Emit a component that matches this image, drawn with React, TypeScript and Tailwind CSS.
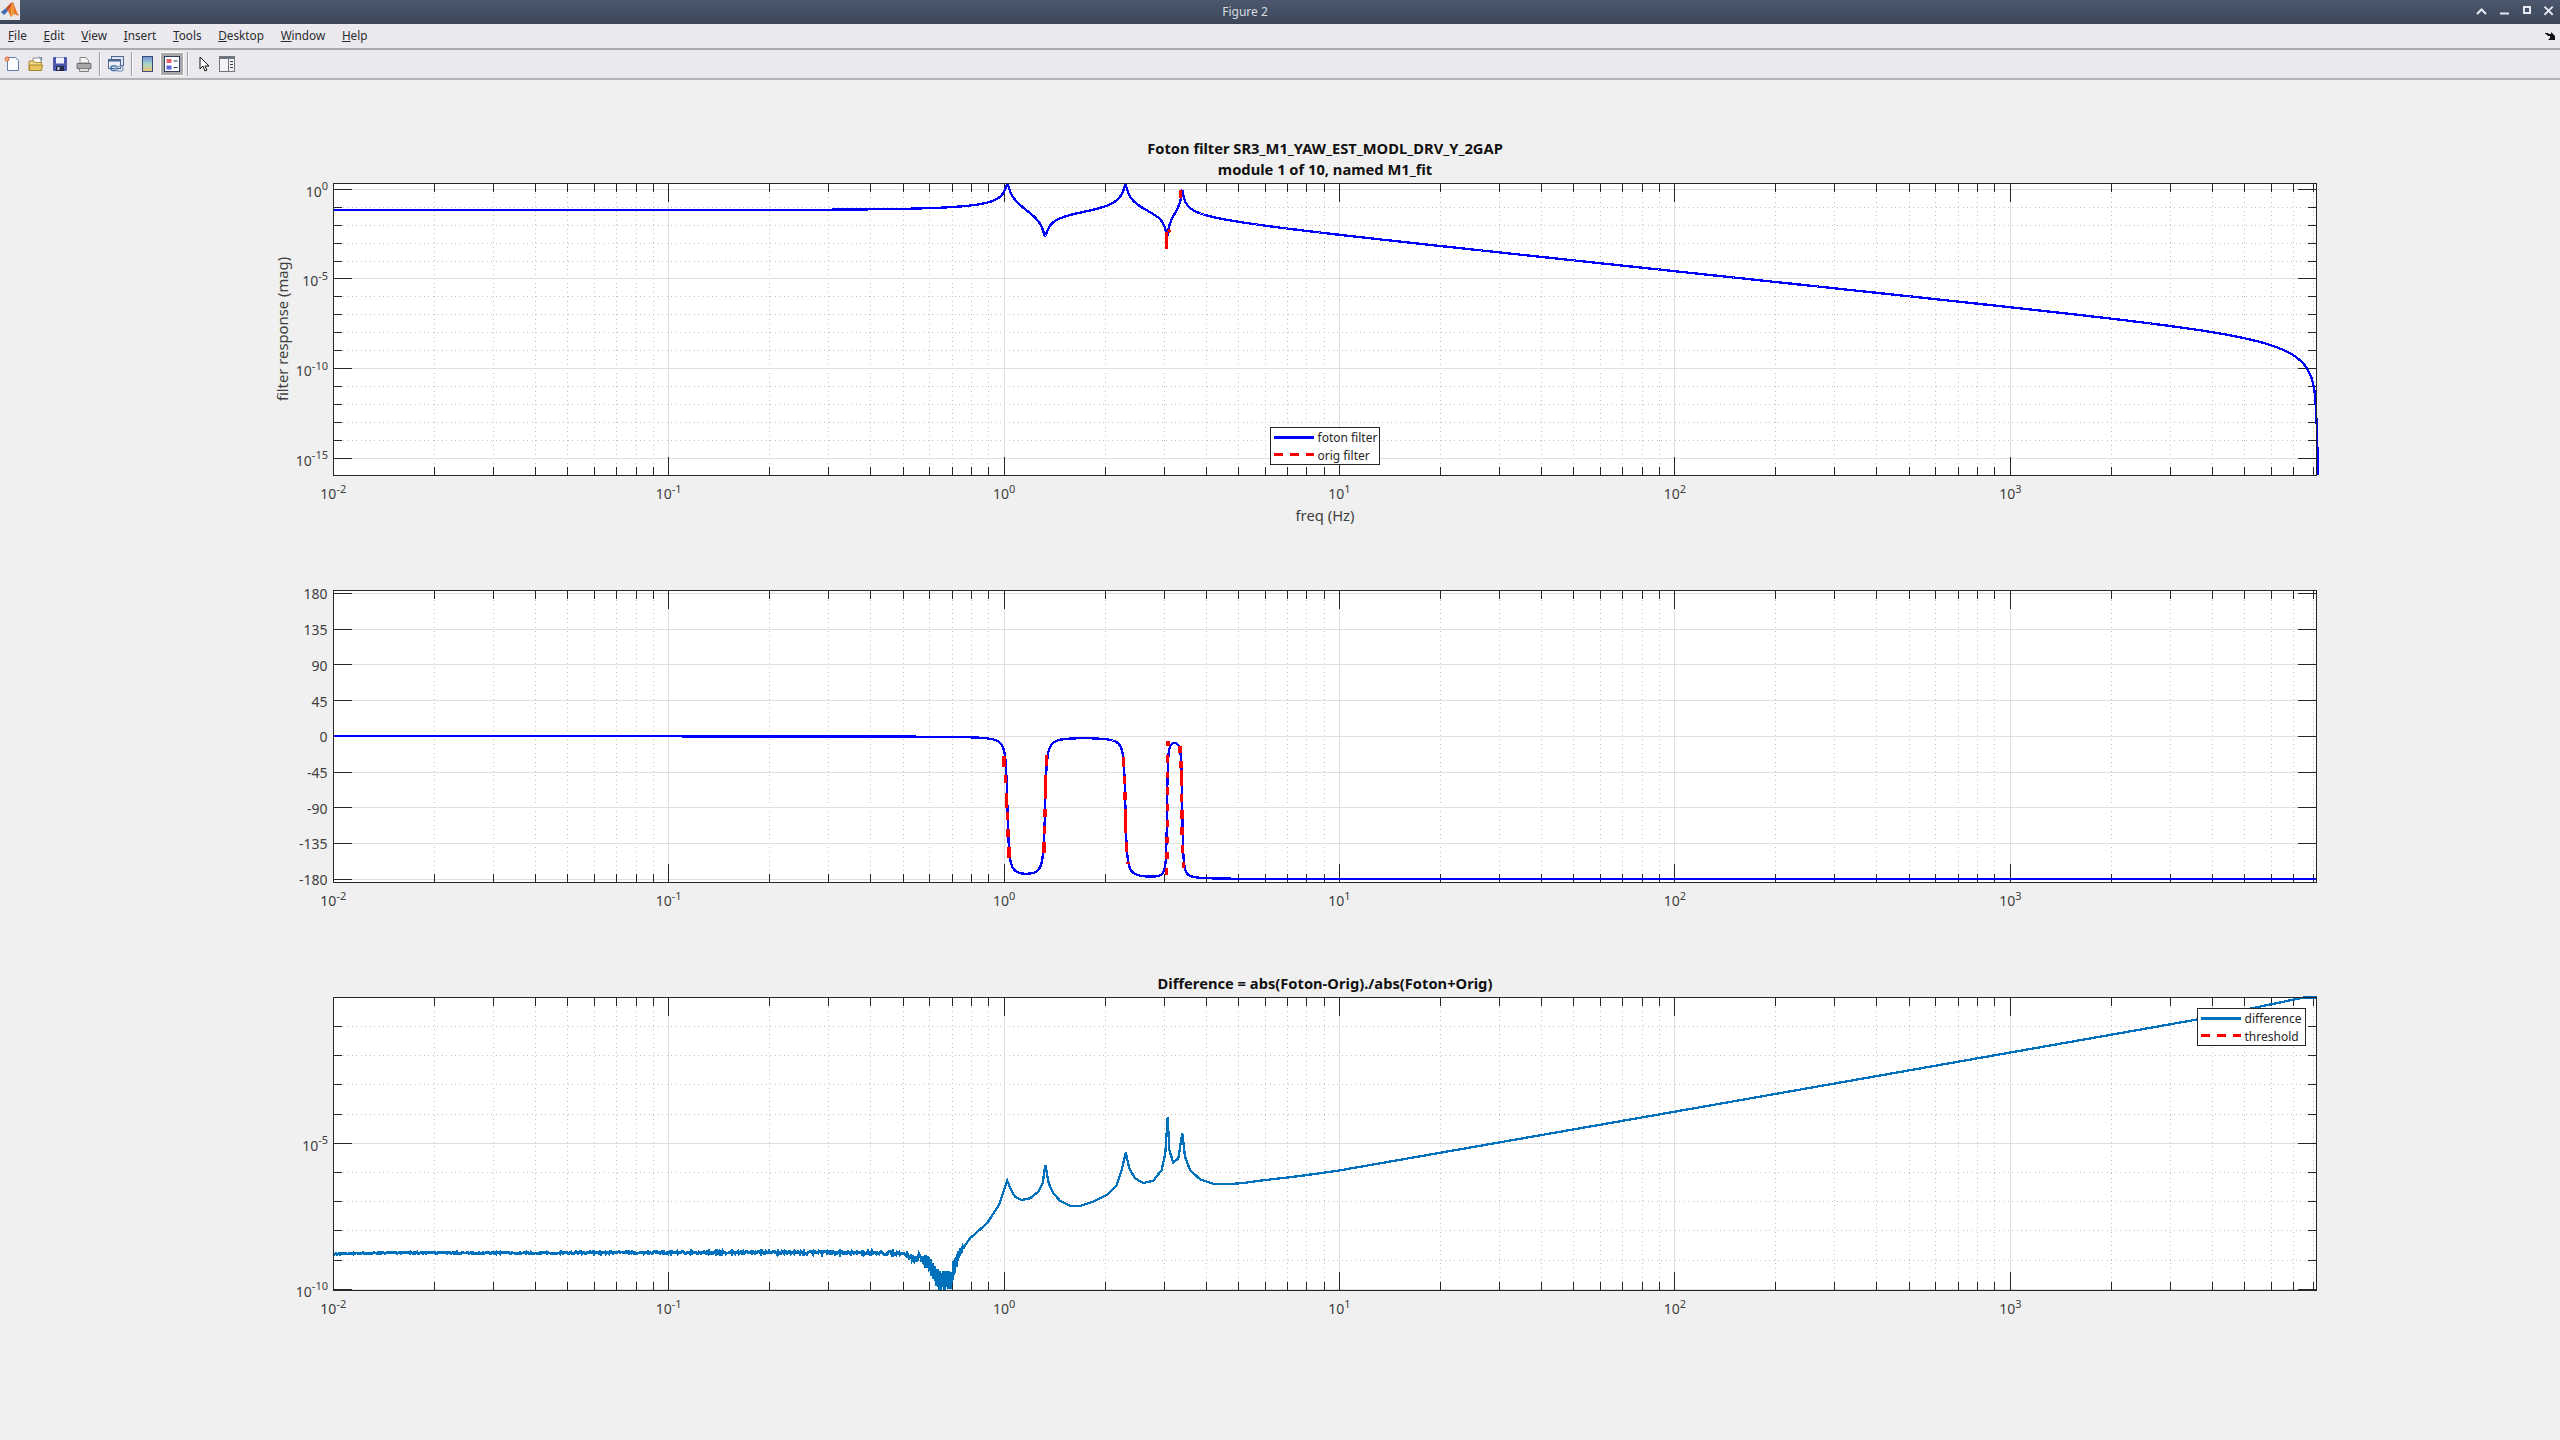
import type { ReactNode } from "react";

// frequency axis shared by all three plots
const X0 = 333.3;
const DEC = 335.4;
const xOf = (f: number) => X0 + DEC * (Math.log10(f) + 2);
const fOf = (x: number) => Math.pow(10, (x - X0) / DEC - 2);

const LEFT = 333.5;
const RIGHT = 2316.5;

const magY = (e: number) => 189.3 - 17.93 * e;
const phaseY = (p: number) => 736.3 - 0.794 * p;
const diffY = (e: number) => 1143.3 - 29.2 * (e + 5);

const range = (a: number, b: number) => {
  const out: number[] = [];
  for (let i = a; i <= b; i++) out.push(i);
  return out;
};

const minorFreqs: number[] = [];
for (let d = -2; d <= 3; d++) {
  for (let k = 2; k <= 9; k++) {
    const f = k * Math.pow(10, d);
    if (xOf(f) < RIGHT) minorFreqs.push(f);
  }
}
const majorFreqs = [0.1, 1, 10, 100, 1000];

// the filter itself: 3 pole pairs, 2 zero pairs, bilinear warped
const POLES = [
  [1.023, 60],
  [2.3, 65],
  [3.4, 110],
];
const ZEROS = [
  [1.325, 58],
  [3.06, 120],
];
const GAIN = 0.27;
const FS = 16384;

function response(f: number) {
  const F = (FS / Math.PI) * Math.tan((Math.PI * f) / FS);
  let logMag = Math.log10(GAIN);
  let phase = 0;
  for (const [f0, q] of ZEROS) {
    const re = f0 * f0 - F * F;
    const im = (F * f0) / q;
    logMag += 0.5 * Math.log10(re * re + im * im);
    phase += Math.atan2(im, re);
  }
  for (const [f0, q] of POLES) {
    const re = f0 * f0 - F * F;
    const im = (F * f0) / q;
    logMag -= 0.5 * Math.log10(re * re + im * im);
    phase -= Math.atan2(im, re);
  }
  return { logMag, deg: (phase * 180) / Math.PI };
}

const samples: number[] = [];
for (let x = X0; x < 2316.4; x += x > 980 && x < 1230 ? 0.2 : 0.6) samples.push(x);

const magPoints =
  samples.map((x) => `${x.toFixed(1)},${Math.max(magY(response(fOf(x)).logMag), 184).toFixed(1)}`).join(" ") +
  " 2317,430 2318,475";
const phasePoints = samples
  .map((x) => `${x.toFixed(1)},${phaseY(response(fOf(x)).deg).toFixed(1)}`)
  .join(" ");

// red dashes only show through on the steep parts of the traces
const toPhase = (x: number, a: number, b: number) => [960 + x / 3, 580 + a / 3, 580 + b / 3];
const phaseDashes = [
  [132, 528, 560], [137, 585, 610], [140, 640, 685], [142, 695, 720], [144, 748, 772], [147, 800, 835],
  [252, 785, 818], [254, 738, 762], [255, 688, 710], [256, 585, 658], [260, 525, 558],
  [491, 530, 562], [493, 588, 612], [495, 636, 660], [496, 688, 760], [499, 785, 815], [504, 847, 853],
  [620, 865, 885], [621, 815, 838], [621, 770, 790], [622, 720, 740], [622, 672, 692], [622, 622, 645],
  [622, 575, 595], [622, 525, 548], [624, 482, 497],
  [660, 498, 520], [663, 543, 565], [664, 570, 617], [664, 642, 665], [666, 690, 716], [666, 742, 766],
  [667, 795, 820], [670, 845, 865],
].map(([x, a, b]) => toPhase(x, a, b));

const diffTable: [number, number][] = [
  [333, 1254.5], [345, 1253.5], [400, 1252.8], [480, 1253], [700, 1252.5], [860, 1252.6], [900, 1253.5],
  [915, 1257], [925, 1261], [932, 1268], [938, 1281], [950, 1281], [955, 1266], [960, 1252], [964, 1247],
];
const diffPeaks: [number, number][] = [
  [964, 1247], [970, 1238.3], [987, 1223.3], [999, 1205], [1004, 1190], [1007.3, 1180.7], [1011, 1190], [1015, 1196.7],
  [1021.7, 1200], [1030, 1198.3], [1038.3, 1191.7], [1042.7, 1183.3], [1045.3, 1164.7], [1048.7, 1183.3],
  [1053.3, 1193.3], [1060, 1200.7], [1070, 1205.7], [1080, 1206], [1093.3, 1201.7], [1106.7, 1195],
  [1116.7, 1185], [1121.7, 1170], [1125.7, 1152.7], [1129.3, 1168.3], [1135, 1178.3], [1143.3, 1183],
  [1153.3, 1180.7], [1161.7, 1170], [1165.3, 1153.3], [1167.7, 1117.3], [1169.3, 1150], [1173.3, 1162.7],
  [1178.3, 1158.3], [1182.3, 1133.3], [1185, 1156.7], [1190, 1170], [1200, 1179.3], [1213.3, 1183.7],
  [1226.7, 1184.3], [1243.3, 1183], [1260, 1180.7], [1300, 1176], [1339, 1170.5], [1673, 1112], [2100, 1036.7],
  [2200, 1019], [2300, 998.3], [2304, 997.5], [2317, 997.5],
];

const lerp = (table: [number, number][], x: number) => {
  for (let i = 1; i < table.length; i++) {
    if (x <= table[i][0]) {
      const [x0, y0] = table[i - 1];
      const [x1, y1] = table[i];
      return y0 + ((x - x0) / (x1 - x0)) * (y1 - y0);
    }
  }
  return table[table.length - 1][1];
};

const jitter = (n: number) => {
  const v = Math.sin(n * 12.9898) * 43758.5453;
  return (v - Math.floor(v)) * 2 - 1;
};

// noise band gets wider towards the dip near 0.65 Hz
const noiseAmp = (x: number) => {
  if (x < 860) return 0.6 + ((x - 333) / 527) * 1.1;
  if (x < 905) return 1.7;
  if (x < 938) return 1.7 + ((x - 905) / 33) * 9;
  if (x < 950) return 10.7;
  return Math.max(10.7 - ((x - 950) / 14) * 9.5, 1);
};

const noisePoints: string[] = [];
for (let x = 333; x <= 964; x += x > 920 ? 0.25 : 1) {
  const y = Math.min(lerp(diffTable, x) + noiseAmp(x) * jitter(x * 2), 1291);
  noisePoints.push(`${x},${y.toFixed(1)}`);
}
const diffNoise = noisePoints.join(" ");
const diffPoints = diffPeaks.map(([x, y]) => `${x},${y}`).join(" ");

function Exp10({ x, y, exp, anchor }: { x: number; y: number; exp: string; anchor: "end" | "middle" }) {
  return (
    <text x={x} y={y} textAnchor={anchor} className="fill-[#404040] text-[14px]">
      10
      <tspan dy={-6.5} className="text-[11px]">
        {exp}
      </tspan>
    </text>
  );
}

function Axes({
  top,
  bottom,
  majorY,
  minorY,
  children,
}: {
  top: number;
  bottom: number;
  majorY: number[];
  minorY: number[];
  children: ReactNode;
}) {
  return (
    <>
      <rect x={LEFT} y={top} width={RIGHT - LEFT} height={bottom - top} className="fill-white" />
      <g shapeRendering="crispEdges" strokeWidth={1}>
        <g className="stroke-[#c0c0c0]" strokeDasharray="1 3.5">
          {minorFreqs.map((f) => (
            <line key={f} x1={xOf(f)} x2={xOf(f)} y1={top} y2={bottom} />
          ))}
          {minorY.map((y) => (
            <line key={y} x1={LEFT} x2={RIGHT} y1={y} y2={y} />
          ))}
        </g>
        <g className="stroke-[#dfdfdf]">
          {majorFreqs.map((f) => (
            <line key={f} x1={xOf(f)} x2={xOf(f)} y1={top} y2={bottom} />
          ))}
          {majorY.map((y) => (
            <line key={y} x1={LEFT} x2={RIGHT} y1={y} y2={y} />
          ))}
        </g>
        <g className="stroke-[#262626]">
          {minorFreqs.map((f) => (
            <g key={f}>
              <line x1={xOf(f)} x2={xOf(f)} y1={top} y2={top + 8.7} />
              <line x1={xOf(f)} x2={xOf(f)} y1={bottom} y2={bottom - 8.7} />
            </g>
          ))}
          {majorFreqs.map((f) => (
            <g key={f}>
              <line x1={xOf(f)} x2={xOf(f)} y1={top} y2={top + 18.7} />
              <line x1={xOf(f)} x2={xOf(f)} y1={bottom} y2={bottom - 18.7} />
            </g>
          ))}
          {minorY.map((y) => (
            <g key={y}>
              <line x1={LEFT} x2={LEFT + 8.7} y1={y} y2={y} />
              <line x1={RIGHT} x2={RIGHT - 8.7} y1={y} y2={y} />
            </g>
          ))}
          {majorY.map((y) => (
            <g key={y}>
              <line x1={LEFT} x2={LEFT + 18.7} y1={y} y2={y} />
              <line x1={RIGHT} x2={RIGHT - 18.7} y1={y} y2={y} />
            </g>
          ))}
        </g>
      </g>
      {children}
      <rect
        x={LEFT}
        y={top}
        width={RIGHT - LEFT}
        height={bottom - top}
        shapeRendering="crispEdges"
        className="fill-none stroke-[#262626]"
      />
      {[-2, -1, 0, 1, 2, 3].map((d) => (
        <Exp10 key={d} x={xOf(Math.pow(10, d))} y={bottom + 23.5} exp={String(d)} anchor="middle" />
      ))}
    </>
  );
}

function Legend({
  x,
  y,
  w,
  color,
  first,
  second,
}: {
  x: number;
  y: number;
  w: number;
  color: string;
  first: string;
  second: string;
}) {
  return (
    <g>
      <rect x={x} y={y} width={w} height={37} shapeRendering="crispEdges" className="fill-white stroke-[#262626]" />
      <line x1={x + 3} x2={x + 43} y1={y + 10} y2={y + 10} stroke={color} strokeWidth={3} shapeRendering="crispEdges" />
      <line
        x1={x + 3}
        x2={x + 43}
        y1={y + 27}
        y2={y + 27}
        stroke="#ff0000"
        strokeWidth={3}
        strokeDasharray="9 7"
        shapeRendering="crispEdges"
      />
      <text x={x + 47} y={y + 14.5} className="fill-[#262626] text-[12px]">
        {first}
      </text>
      <text x={x + 47} y={y + 32} className="fill-[#262626] text-[12px]">
        {second}
      </text>
    </g>
  );
}

function MagnitudePlot() {
  return (
    <svg className="block h-[407px] w-[2560px]" viewBox="0 130 2560 407">
      <text x={1325} y={154} textAnchor="middle" className="fill-[#111111] text-[14.7px] font-bold">
        Foton filter SR3_M1_YAW_EST_MODL_DRV_Y_2GAP
      </text>
      <text x={1325} y={175} textAnchor="middle" className="fill-[#111111] text-[14.7px] font-bold">
        module 1 of 10, named M1_fit
      </text>
      <Axes
        top={183.5}
        bottom={475.5}
        majorY={[0, -5, -10, -15].map(magY)}
        minorY={range(-14, -1).filter((e) => e % 5 !== 0).map(magY)}
      >
        <polyline
          points={magPoints}
          fill="none"
          stroke="#0000ff"
          strokeWidth={2.3}
          shapeRendering="crispEdges"
        />
        <g stroke="#ff0000" strokeWidth={3} shapeRendering="crispEdges">
          <line x1={1166.8} x2={1166.8} y1={232} y2={249} />
          <line x1={1168} x2={1170} y1={232} y2={230} />
          <line x1={1181} x2={1180.3} y1={190} y2={198} />
        </g>
        <Legend x={1270.5} y={427.5} w={109} color="#0000ff" first="foton filter" second="orig filter" />
      </Axes>
      {[0, -5, -10, -15].map((e) => (
        <Exp10 key={e} x={328} y={magY(e) + 7.4} exp={String(e)} anchor="end" />
      ))}
      <text
        transform="translate(287.5 329) rotate(-90)"
        textAnchor="middle"
        className="fill-[#404040] text-[14.8px]"
      >
        filter response (mag)
      </text>
      <text x={1325} y={520.5} textAnchor="middle" className="fill-[#404040] text-[14.8px]">
        freq (Hz)
      </text>
    </svg>
  );
}

function PhasePlot() {
  const ticks = [180, 135, 90, 45, 0, -45, -90, -135, -180];
  return (
    <svg className="block h-[407px] w-[2560px]" viewBox="0 537 2560 407">
      <Axes top={590.5} bottom={882.5} majorY={ticks.map(phaseY)} minorY={[]}>
        <polyline
          points={phasePoints}
          fill="none"
          stroke="#0000ff"
          strokeWidth={2.3}
          shapeRendering="crispEdges"
        />
        <g stroke="#ff0000" strokeWidth={3.5} shapeRendering="crispEdges">
          {phaseDashes.map(([x, a, b]) => (
            <line key={`${x}-${a}`} x1={x} x2={x} y1={a} y2={b} />
          ))}
        </g>
      </Axes>
      {ticks.map((p) => (
        <text key={p} x={327.5} y={phaseY(p) + 6} textAnchor="end" className="fill-[#404040] text-[14px]">
          {p}
        </text>
      ))}
    </svg>
  );
}

function DifferencePlot() {
  return (
    <svg className="block h-[407px] w-[2560px]" viewBox="0 944 2560 407">
      <text x={1325} y={989} textAnchor="middle" className="fill-[#111111] text-[14.7px] font-bold">
        Difference = abs(Foton-Orig)./abs(Foton+Orig)
      </text>
      <Axes
        top={997.5}
        bottom={1290.5}
        majorY={[-5, -10].map(diffY).concat(1290)}
        minorY={[-1, -2, -3, -4, -6, -7, -8, -9].map(diffY)}
      >
        <polyline points={diffNoise} fill="none" stroke="#0072bd" strokeWidth={2.8} shapeRendering="crispEdges" />
        <polyline points={diffPoints} fill="none" stroke="#0072bd" strokeWidth={2.3} shapeRendering="crispEdges" />
        <Legend x={2197.5} y={1008.5} w={108} color="#0072bd" first="difference" second="threshold" />
      </Axes>
      <Exp10 x={328} y={diffY(-5) + 7.4} exp="-5" anchor="end" />
      <Exp10 x={328} y={1289.5 + 7.4} exp="-10" anchor="end" />
    </svg>
  );
}

function MatlabLogo() {
  return (
    <svg viewBox="0 0 20 20" className="h-5 w-5">
      <rect width="20" height="20" fill="#e8e8ea" />
      <polygon points="1,12 6,8 8,11 4,15" fill="#3f6fb0" />
      <polygon points="6,8 11,3 13,2 8,11" fill="#c8451c" />
      <polygon points="13,2 16,10 19,16 14,14 11,17 8,11" fill="#e8742a" />
      <polygon points="13,2 11,9 11,17 14,14" fill="#f2a03c" />
    </svg>
  );
}

function TitleBar() {
  return (
    <div className="flex h-6 items-start bg-gradient-to-b from-[#4b576c] to-[#3c4759]">
      <MatlabLogo />
      <div className="flex h-6 flex-1 items-center justify-center text-[12px] text-[#d8dce4]">Figure 2</div>
      <div className="flex h-6 w-[90px] items-center text-[#e8e8f0]">
        <svg viewBox="0 0 23 24" className="h-6 w-[23px]">
          <path d="M7 14l4.5-4.5L16 14" fill="none" stroke="currentColor" strokeWidth="2" />
        </svg>
        <svg viewBox="0 0 23 24" className="h-6 w-[23px]">
          <rect x="7" y="12.5" width="9" height="2" fill="currentColor" />
        </svg>
        <svg viewBox="0 0 23 24" className="h-6 w-[23px]">
          <rect x="8" y="7" width="6" height="6" fill="none" stroke="currentColor" strokeWidth="2" />
        </svg>
        <svg viewBox="0 0 23 24" className="h-6 w-[21px]">
          <path d="M6 6l9 9M15 6l-9 9" fill="none" stroke="currentColor" strokeWidth="2" />
        </svg>
      </div>
    </div>
  );
}

function MenuBar() {
  const items = ["File", "Edit", "View", "Insert", "Tools", "Desktop", "Window", "Help"];
  return (
    <div className="flex h-[26px] items-center gap-[16.7px] border-b-2 border-[#aaaaaa] bg-[#ebe9ee] pl-2 text-[11.75px] text-[#2a2c30]">
      {items.map((item) => (
        <span key={item}>
          <span className="underline">{item[0]}</span>
          {item.slice(1)}
        </span>
      ))}
      <svg viewBox="0 0 10 8" className="ml-auto mr-[5px] h-2 w-[10px]">
        <path d="M0 1h3l1 1h2V0l4 4v4H3L5 6V4H3L1 2H0z" fill="#111111" />
      </svg>
    </div>
  );
}

function ToolSep({ className }: { className?: string }) {
  return (
    <div className={`flex h-6 w-[7px] justify-center ${className ?? ""}`}>
      <div className="w-px bg-[#9a9a9a]" />
      <div className="w-px bg-white" />
    </div>
  );
}

function ToolButton({ children, className }: { children: ReactNode; className?: string }) {
  return <div className={`flex h-6 w-6 items-center justify-center ${className ?? ""}`}>{children}</div>;
}

function Toolbar() {
  return (
    <div className="flex h-[30px] items-center border-b-2 border-[#b4b4b4] bg-[#ebe9ee]">
      <ToolButton>
        <svg viewBox="0 0 16 16" className="h-4 w-4">
          <path d="M3.5 1.5h8l3 3v10h-11z" fill="#fafcff" stroke="#5f7ea8" />
          <circle cx="3" cy="3" r="2" fill="#f6b090" stroke="#e0662e" />
        </svg>
      </ToolButton>
      <ToolButton>
        <svg viewBox="0 0 16 16" className="h-4 w-4">
          <path d="M5 7V2h8v5z" fill="#ffffff" stroke="#8a8a8a" />
          <path d="M11 1l3 1-1 3" fill="none" stroke="#5f7ea8" />
          <path d="M1 5h5l1 1.5h6.5v8h-12.5z" fill="#f2d98a" stroke="#a9882e" />
          <path d="M1.5 9h13l-1 5.5h-12z" fill="#e8c45c" stroke="#a9882e" />
        </svg>
      </ToolButton>
      <ToolButton>
        <svg viewBox="0 0 16 16" className="h-4 w-4">
          <rect x="1" y="1" width="14" height="14" rx="1" fill="#4b55ad" />
          <rect x="4" y="1.5" width="8" height="6" fill="#eef0fb" />
          <rect x="4" y="10" width="8" height="5" fill="#262a4a" />
          <rect x="5.5" y="11" width="2" height="3" fill="#d8d8e0" />
        </svg>
      </ToolButton>
      <ToolButton>
        <svg viewBox="0 0 16 16" className="h-4 w-4">
          <path d="M4 7V1.5h6l2.5 3V7z" fill="#f4f4f4" stroke="#8a8a8a" />
          <path d="M1 7.5h14v5H1z" fill="#a8a8a8" stroke="#6e6e6e" />
          <path d="M3.5 12.5h9v3h-9z" fill="#e2e2e2" stroke="#7e7e7e" />
        </svg>
      </ToolButton>
      <ToolSep />
      <ToolButton className="ml-[1px]">
        <svg viewBox="0 0 16 16" className="h-4 w-4">
          <rect x="3.5" y="0.5" width="12" height="9" fill="#dfe6f2" stroke="#4c678f" />
          <rect x="0.5" y="3.5" width="12" height="9" fill="#e8edf6" stroke="#4c678f" />
          <rect x="0.5" y="3.5" width="12" height="2" fill="#4c678f" />
          <rect x="3" y="10" width="6" height="4.5" rx="2" fill="none" stroke="#3f6fa8" strokeWidth="1.4" />
          <rect x="8" y="10.5" width="7" height="4.5" rx="2" fill="none" stroke="#8fa8c8" strokeWidth="1.4" />
        </svg>
      </ToolButton>
      <ToolSep />
      <ToolButton>
        <svg viewBox="0 0 11 16" className="h-4 w-[11px]">
          <defs>
            <linearGradient id="cbar" x1="0" x2="0" y1="0" y2="1">
              <stop offset="0" stopColor="#6f8fdc" />
              <stop offset="0.5" stopColor="#a8d8c8" />
              <stop offset="1" stopColor="#f2c070" />
            </linearGradient>
          </defs>
          <rect x="0.5" y="0.5" width="10" height="15" fill="url(#cbar)" stroke="#3c4e78" />
        </svg>
      </ToolButton>
      <ToolButton className="ml-[1px] border border-white bg-[#a9a9a9]">
        <svg viewBox="0 0 16 16" className="h-4 w-4">
          <rect x="0.5" y="0.5" width="15" height="15" fill="#ffffff" stroke="#2e3e5c" />
          <rect x="2.5" y="3" width="5" height="4" fill="#e0626a" />
          <rect x="2.5" y="9.5" width="5" height="4" fill="#5a66e0" />
          <rect x="9.5" y="4.5" width="4" height="1" fill="#2e3e5c" />
          <rect x="9.5" y="11" width="4" height="1" fill="#2e3e5c" />
        </svg>
      </ToolButton>
      <ToolSep />
      <ToolButton className="ml-[1px]">
        <svg viewBox="0 0 10 16" className="h-4 w-[10px]">
          <path d="M1 1v12l3-3 2 5 2-1-2-4h4z" fill="#ffffff" stroke="#111111" />
        </svg>
      </ToolButton>
      <ToolButton className="-ml-[1px]">
        <svg viewBox="0 0 16 16" className="h-4 w-4">
          <rect x="0.5" y="0.5" width="15" height="15" fill="#f4f4f6" stroke="#707680" />
          <rect x="1" y="1" width="14" height="2" fill="#707680" />
          <rect x="9" y="1" width="1" height="14" fill="#707680" />
          <rect x="11" y="5" width="3" height="1" fill="#404040" />
          <rect x="11" y="8" width="3" height="1" fill="#404040" />
          <rect x="11" y="11" width="3" height="1" fill="#404040" />
        </svg>
      </ToolButton>
    </div>
  );
}

export default function App() {
  return (
    <div className="flex h-[1440px] w-[2560px] flex-col overflow-hidden bg-[#f0f0f0] font-['Noto_Sans',sans-serif]">
      <TitleBar />
      <MenuBar />
      <Toolbar />
      <div className="flex flex-col pt-[50px]">
        <MagnitudePlot />
        <PhasePlot />
        <DifferencePlot />
      </div>
    </div>
  );
}
